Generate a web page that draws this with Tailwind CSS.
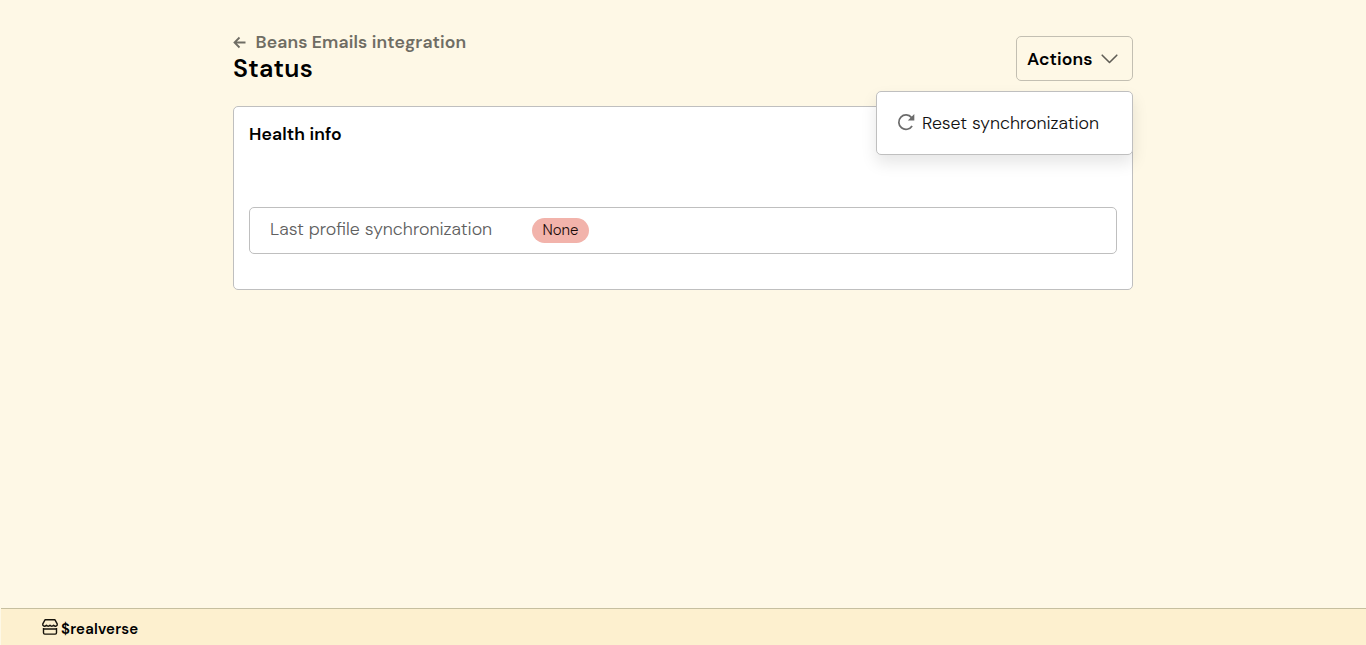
<!DOCTYPE html>
<html lang="en">
<head>
<meta charset="utf-8">
<title>Status</title>
<script src="https://cdn.jsdelivr.net/npm/@tailwindcss/browser@4"></script>
</head>
<body class="flex h-screen flex-col overflow-hidden bg-[#fef8e6] font-['DM_Sans',Inter,sans-serif] text-black">
<main class="mx-auto w-[900px] flex-1">
  <header class="relative z-10 flex h-[106px] items-start justify-between">
    <div class="pt-[30px]">
      <a class="flex h-6 items-center text-[17.6px] font-semibold text-[#6f6d64]">
        <svg class="mr-[9.5px] h-[13px] w-[13px]" viewBox="0 0 13 13" fill="none" stroke="currentColor" stroke-width="1.8"><path d="M12.5 6.5H1.5M6.5 1.5l-5 5 5 5"/></svg>
        <span class="whitespace-nowrap pt-px tracking-[0.11px]">Beans Emails integration</span>
      </a>
      <h1 class="h-[30px] text-[25px] leading-[30px] font-semibold tracking-[0.3px]">Status</h1>
    </div>
    <div class="relative mt-9">
      <button class="flex h-[45px] w-[117px] items-center justify-between rounded-[5px] border border-[#c3bfb2] pr-[14px] pl-[10px] text-[17.6px] font-semibold">
        <span class="pt-[2px] tracking-[0.11px]">Actions</span>
        <svg class="mt-px h-[10px] w-[17px]" viewBox="0 0 17 10" fill="none" stroke="#605e56" stroke-width="1.6" stroke-linecap="round" stroke-linejoin="round"><path d="M1.2 1.2l7.3 7.3 7.3-7.3"/></svg>
      </button>
      <div class="absolute top-[55px] right-0 flex h-16 w-[257px] items-center rounded-[5px] border border-[#bfbfbf] bg-white pl-5 shadow-[0_8px_16px_rgba(0,0,0,0.1)]">
        <svg class="mr-[7px] mb-[2px] h-[18px] w-[18px]" viewBox="0 0 18 18" fill="none" stroke="#6b6b6b" stroke-width="1.7"><path d="M14.6 4.6A7.2 7.2 0 1 0 15.1 13"/><path d="M17.3 1v6.6h-6.5z" fill="#6b6b6b" stroke="none"/></svg>
        <span class="pt-px text-[17.75px] font-light whitespace-nowrap text-[#111]">Reset synchronization</span>
      </div>
    </div>
  </header>
  <section class="h-[184px] rounded-[5px] border border-[#bfbfbf] bg-white px-[15px] pt-[15px]">
    <h2 class="h-6 text-[17.6px] leading-6 font-semibold tracking-[0.11px]">Health info</h2>
    <div class="mt-[61px] flex h-[47px] items-center rounded-[5px] border border-[#bfbfbf] pl-5">
      <span class="w-[262px] pb-[2px] text-[17.8px] font-light whitespace-nowrap text-[#606060]">Last profile synchronization</span>
      <span class="flex h-[25px] w-[57px] items-center justify-center rounded-full bg-[#f2b3ab] text-[15px] font-light text-[#1b0b09]">None</span>
    </div>
  </section>
</main>
<footer class="ml-px flex h-[37px] items-center border-t border-[#c6bf9f] bg-[#fdf0cf] pt-1 pl-[41px]">
  <svg class="mr-[3px] mb-[4px] h-4 w-4" viewBox="0 0 16 16" fill="none" stroke="#17130a" stroke-width="1.4" stroke-linejoin="round"><path d="M3 .8h10l2.2 4.1v1.2c-.8 1.5-2.4 1.5-3.6.2-1 1.2-2.6 1.2-3.6 0-1 1.2-2.6 1.2-3.6 0-1.2 1.3-2.8 1.3-3.6-.2V4.900zM1.500 9v4.800q0 1.300 1.300 1.300h10.400q1.300 0 1.300-1.300V9M1.500 10h13"/></svg>
  <span class="text-[15px] font-semibold tracking-[0.18px]">$realverse</span>
</footer>
</body>
</html>
